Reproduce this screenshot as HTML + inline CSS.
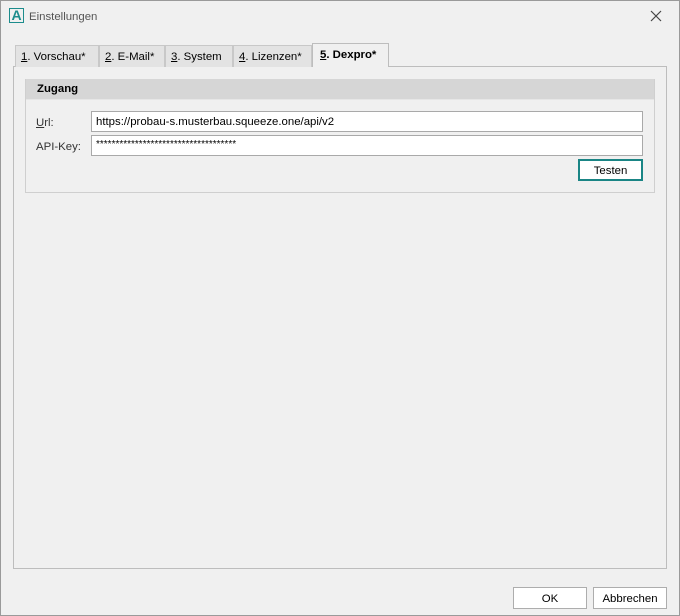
<!DOCTYPE html>
<html><head><style>
*{box-sizing:border-box;margin:0;padding:0}
body{width:680px;height:616px;background:#f0f0f0;font-family:"Liberation Sans",sans-serif;font-size:11.4px;color:#000;position:relative;overflow:hidden}
.a{position:absolute}
.tab{position:absolute;top:45px;height:22px;border:1px solid #c8c8c8;border-bottom:none;background:#e3e3e3;padding:5px 0 0 5px}
.inp{position:absolute;left:91px;width:552px;height:21px;background:#fff;border:1px solid #a9a9a9;padding:4px 4px}
.btn{position:absolute;height:22px;background:#fff;border:1px solid #adadad;text-align:center;padding-top:5px}
</style></head><body>
<div class="a" style="left:0;top:0;width:680px;height:616px;border:1px solid #9a9a9a"></div>
<div class="a" style="left:9px;top:8px;width:15px;height:15px;border:1px solid #1c8c8c;color:#1c8c8c;font-weight:bold;font-size:14px;line-height:13px;text-align:center">A</div>
<div class="a" style="left:29px;top:11px;color:#555">Einstellungen</div>
<svg class="a" style="left:650px;top:10px" width="12" height="12"><path d="M1 1L11 11M11 1L1 11" stroke="#444" stroke-width="1.2"/></svg>
<div class="a" style="left:13px;top:66px;width:654px;height:503px;border:1px solid #bdbdbd;background:#f0f0f0"></div>
<div class="tab" style="left:15px;width:84px"><u>1</u>. Vorschau*</div>
<div class="tab" style="left:99px;width:66px"><u>2</u>. E-Mail*</div>
<div class="tab" style="left:165px;width:68px"><u>3</u>. System</div>
<div class="tab" style="left:233px;width:79px"><u>4</u>. Lizenzen*</div>
<div class="tab" style="left:312px;top:43px;height:24px;width:77px;background:#f0f0f0;border-color:#bdbdbd;font-weight:bold;padding-top:5px;padding-left:7px"><u>5</u>. Dexpro*</div>
<div class="a" style="left:25px;top:79px;width:630px;height:114px;border:1px solid #cfcfcf"></div>
<div class="a" style="left:26px;top:79px;width:628px;height:21px;background:#d6d6d6;border-bottom:1px solid #e6e6e6;font-weight:bold;padding:4px 0 0 11px">Zugang</div>
<div class="a" style="left:36px;top:117px;color:#333"><u>U</u>rl:</div>
<div class="a" style="left:36px;top:141px;color:#333">API-Key:</div>
<div class="inp" style="top:111px">https://probau-s.musterbau.squeeze.one/api/v2</div>
<div class="inp" style="top:135px;font-size:10px;padding-top:3px">************************************</div>
<div class="btn" style="left:578px;top:159px;width:65px;border:2px solid #1a8585;padding-top:4px">Testen</div>
<div class="btn" style="left:513px;top:587px;width:74px">OK</div>
<div class="btn" style="left:593px;top:587px;width:74px">Abbrechen</div>
</body></html>
